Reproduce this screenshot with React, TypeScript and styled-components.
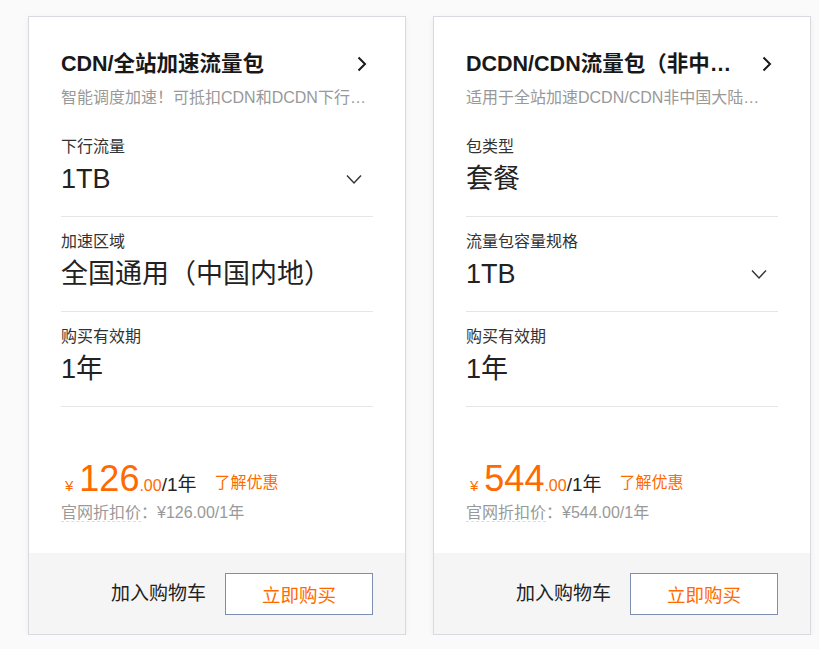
import React from "react";
import styled, { createGlobalStyle } from "styled-components";

const GlobalStyle = createGlobalStyle`
  html, body {
    margin: 0;
    padding: 0;
    background: #fafafa;
  }
  body {
    font-family: "Liberation Sans", "Noto Sans CJK SC", sans-serif;
    color: #333;
  }
`;

const Page = styled.div`
  display: flex;
  gap: 27px;
  padding: 16px 0 0 28px;
`;

const Card = styled.div`
  box-sizing: border-box;
  width: 378px;
  height: 619px;
  display: flex;
  flex-direction: column;
  background: #fff;
  border: 1px solid #d9d9e1;
  box-shadow: 0 2px 6px rgba(0, 0, 0, 0.06);
`;

const Body = styled.div`
  padding: 33px 32px 0;
  display: flex;
  flex-direction: column;
`;

const TitleRow = styled.div`
  display: flex;
  align-items: center;
  height: 28px;
`;

const Title = styled.div`
  flex: 1;
  min-width: 0;
  font-size: 21.5px;
  line-height: 28px;
  font-weight: 700;
  color: #181818;
  white-space: nowrap;
`;

const ArrowRight = styled.svg`
  flex: none;
  margin-left: 20px;
  margin-right: 6px;
`;

const Subtitle = styled.div`
  margin-top: 9px;
  font-size: 16px;
  line-height: 22px;
  color: #999;
  white-space: nowrap;
`;

const Fields = styled.div`
  margin-top: 13px;
`;

const Field = styled.div`
  padding: 14px 0 18px;
  border-bottom: 1px solid #e6e6e6;
`;

const Label = styled.div`
  font-size: 16px;
  line-height: 22px;
  color: #333;
`;

const ValueRow = styled.div`
  margin-top: 2px;
  display: flex;
  align-items: center;
  justify-content: space-between;
  height: 38px;
`;

const Value = styled.div`
  font-size: 27px;
  line-height: 38px;
  color: #222;
  white-space: nowrap;
`;

const ArrowDown = styled.svg`
  flex: none;
  margin-right: 11px;
`;

const PriceLine = styled.div`
  margin-top: 52px;
  padding-left: 4px;
  font-size: 36px;
  line-height: 40px;
  height: 40px;
  white-space: nowrap;
`;

const Yen = styled.span`
  font-size: 15px;
  line-height: 1;
  color: #ff6a00;
  margin-right: 6px;
`;

const Big = styled.span`
  font-size: 36px;
  line-height: 1;
  color: #ff6a00;
`;

const Cents = styled.span`
  font-size: 16px;
  line-height: 1;
  color: #ff6a00;
`;

const Unit = styled.span`
  font-size: 19px;
  line-height: 1;
  color: #222;
`;

const Promo = styled.span`
  font-size: 16px;
  line-height: 1;
  color: #ff6a00;
  margin-left: 18px;
  vertical-align: 3px;
`;

const Discount = styled.div`
  margin-top: 3px;
  font-size: 16px;
  line-height: 22px;
  color: #999;
  white-space: nowrap;
`;

const Dashed = styled.span`
  border-bottom: 1px dashed #ddd;
`;

const Footer = styled.div`
  margin-top: auto;
  height: 81px;
  flex: none;
  background: #f5f5f5;
  display: flex;
  align-items: center;
  justify-content: flex-end;
  gap: 19px;
  padding: 0 32px;
`;

const CartButton = styled.span`
  font-size: 19px;
  line-height: 24px;
  color: #222;
`;

const BuyButton = styled.div`
  box-sizing: border-box;
  width: 148px;
  height: 42px;
  border: 1px solid #7d8eb0;
  display: flex;
  align-items: center;
  justify-content: center;
  font-size: 18.5px;
  color: #ff6a00;
  background: #fff;
`;

type FieldData = { label: string; value: string; select?: boolean };

type CardData = {
  title: string;
  subtitle: string;
  fields: FieldData[];
  price: string;
};

const cards: CardData[] = [
  {
    title: "CDN/全站加速流量包",
    subtitle: "智能调度加速！可抵扣CDN和DCDN下行…",
    fields: [
      { label: "下行流量", value: "1TB", select: true },
      { label: "加速区域", value: "全国通用（中国内地）" },
      { label: "购买有效期", value: "1年" },
    ],
    price: "126",
  },
  {
    title: "DCDN/CDN流量包（非中…",
    subtitle: "适用于全站加速DCDN/CDN非中国大陆…",
    fields: [
      { label: "包类型", value: "套餐" },
      { label: "流量包容量规格", value: "1TB", select: true },
      { label: "购买有效期", value: "1年" },
    ],
    price: "544",
  },
];

function ProductCard({ data }: { data: CardData }) {
  return (
    <Card>
      <Body>
        <TitleRow>
          <Title>{data.title}</Title>
          <ArrowRight width="10" height="16" viewBox="0 0 10 16">
            <path d="M1.5 1.5 L8 8 L1.5 14.5" fill="none" stroke="#1a1a1a" strokeWidth="2" />
          </ArrowRight>
        </TitleRow>
        <Subtitle>{data.subtitle}</Subtitle>
        <Fields>
          {data.fields.map((f) => (
            <Field key={f.label}>
              <Label>{f.label}</Label>
              <ValueRow>
                <Value>{f.value}</Value>
                {f.select && (
                  <ArrowDown width="16" height="11" viewBox="0 0 16 11">
                    <path d="M1 1.5 L8 9 L15 1.5" fill="none" stroke="#333" strokeWidth="1.4" />
                  </ArrowDown>
                )}
              </ValueRow>
            </Field>
          ))}
        </Fields>
        <PriceLine>
          <Yen>¥</Yen>
          <Big>{data.price}</Big>
          <Cents>.00</Cents>
          <Unit>/1年</Unit>
          <Promo>了解优惠</Promo>
        </PriceLine>
        <Discount>
          <Dashed>官网折扣价</Dashed>：¥{data.price}.00/1年
        </Discount>
      </Body>
      <Footer>
        <CartButton>加入购物车</CartButton>
        <BuyButton>立即购买</BuyButton>
      </Footer>
    </Card>
  );
}

export default function App() {
  return (
    <>
      <GlobalStyle />
      <Page>
        {cards.map((c) => (
          <ProductCard key={c.title} data={c} />
        ))}
      </Page>
    </>
  );
}
